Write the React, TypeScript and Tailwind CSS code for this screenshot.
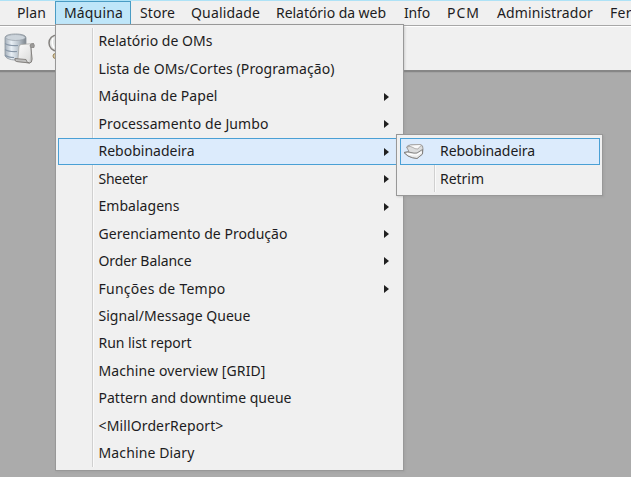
import { useLayoutEffect, useRef } from "react";

type LabelProps = { text: string; width: number };

/* Text whose tracking is adjusted so that it fills the given width. */
function Label({ text, width }: LabelProps) {
  const ref = useRef<HTMLSpanElement>(null);
  useLayoutEffect(() => {
    const el = ref.current;
    if (!el) return;
    el.style.letterSpacing = "0px";
    const natural = el.getBoundingClientRect().width;
    el.style.letterSpacing = `${(width + 1 - natural) / text.length}px`;
  }, [text, width]);
  return (
    <span ref={ref} className="inline-block pb-[0.9px] leading-5 whitespace-pre">
      {text}
    </span>
  );
}

const bar = [
  { text: "Plan", width: 28, box: "w-[47px] pl-[9px] ml-2" },
  { text: "Máquina", width: 58, box: "w-[76px] pl-2 border border-[#4a9cc4] bg-[#bfe6f9]" },
  { text: "Store", width: 34, box: "w-[52px] pl-[9px]" },
  { text: "Qualidade", width: 68, box: "w-[85px] pl-2" },
  { text: "Relatório da web", width: 109, box: "w-[127px] pl-2" },
  { text: "Info", width: 25, box: "w-[44px] pl-[9px]" },
  { text: "PCM", width: 32, box: "w-[50px] pl-2" },
  { text: "Administrador", width: 95, box: "w-[113px] pl-2" },
  { text: "Fer", width: 21, box: "w-[30px] pl-2" },
];

const items = [
  { text: "Relatório de OMs", width: 113 },
  { text: "Lista de OMs/Cortes (Programação)", width: 235 },
  { text: "Máquina de Papel", width: 118, sub: true },
  { text: "Processamento de Jumbo", width: 169, sub: true },
  { text: "Rebobinadeira", width: 95, sub: true, active: true },
  { text: "Sheeter", width: 48, sub: true },
  { text: "Embalagens", width: 80, sub: true },
  { text: "Gerenciamento de Produção", width: 188, sub: true },
  { text: "Order Balance", width: 92, sub: true },
  { text: "Funções de Tempo", width: 126, sub: true },
  { text: "Signal/Message Queue", width: 151 },
  { text: "Run list report", width: 92 },
  { text: "Machine overview [GRID]", width: 166 },
  { text: "Pattern and downtime queue", width: 192 },
  { text: "<MillOrderReport>", width: 124 },
  { text: "Machine Diary", width: 95 },
];

function DatabaseIcon() {
  return (
    <svg className="mt-1.5 ml-1 h-[32px] w-[32px] shrink-0" viewBox="0 0 32 32">
      <defs>
        <linearGradient id="db" x1="0" x2="1">
          <stop offset="0" stopColor="#a2adb9" />
          <stop offset=".3" stopColor="#e8eff5" />
          <stop offset=".65" stopColor="#b9c3cc" />
          <stop offset="1" stopColor="#7d858c" />
        </linearGradient>
        <linearGradient id="paper" x1="0" y1="0" x2="1" y2="1">
          <stop offset="0" stopColor="#ffffff" />
          <stop offset="1" stopColor="#d6d7d6" />
        </linearGradient>
      </defs>
      <path d="M1 5C1 2 6 1 11.500 1S22 2 22 5V23C22 26 17 27 11.500 27S1 25 1 22Z" fill="url(#db)" stroke="#8b949c" strokeWidth=".8" />
      <ellipse cx="11.500" cy="4.500" rx="9.700" ry="3" fill="#ccd4db" stroke="#99a2aa" strokeWidth=".7" />
      <path d="M1 10.500Q5 13 14 12.500M1 16.500Q5 19 13 18.500M1 22Q4 24.500 10 24.500" fill="none" stroke="#8998a8" strokeWidth="1.100" />
      <path d="M15 14Q15 11.500 17.500 11.500L29.500 10.500Q27.500 12 27 15L28 26Q28 30 25.500 30L12.500 28.500Q10.500 28 11 25.500H14Z" fill="url(#paper)" stroke="#a4a3a1" strokeWidth=".7" />
      <path d="M26 12Q27 10.500 29.500 10.500Q31 12 30 14.500H26.500Z" fill="#9c9b99" stroke="#73716e" strokeWidth=".6" />
      <path d="M11 25.500L22 26.500Q22.500 30 25.500 30L12.500 28.500Q10.500 28 11 25.500ZM27 15L28 26Q28 30 25.500 30" fill="#c0c0bf" stroke="#777471" strokeWidth=".8" />
    </svg>
  );
}

function SearchPersonIcon() {
  return (
    <svg className="mt-[7px] ml-[12px] h-[29px] w-[18px] shrink-0" viewBox="0 0 18 29">
      <circle cx="9" cy="9" r="8" fill="#e2e4e3" stroke="#85827f" strokeWidth="1.500" />
      <path d="M5 4Q3 9 6 14" fill="none" stroke="#ffffff" strokeWidth="1.500" />
      <circle cx="7.500" cy="22" r="2.500" fill="#dbcba2" stroke="#97835a" />
    </svg>
  );
}

function RollIcon() {
  return (
    <svg className="h-[17px] w-[22px]" viewBox="0 0 22 17">
      <path d="M1 9.500L6 8.500L3.500 4Q5 2 7.500 2L17 1.500Q20.500 2 20 6L19.500 11L14 15.500Q9 15 5 13Z" fill="#dcdddd" stroke="#92918f" strokeWidth=".9" />
      <path d="M4 4Q7 2.500 10 4.500Q11.500 6 15 6Q17 2.500 19 2.500L17 1.500L7.500 2Z" fill="#fafafa" stroke="#9b9a98" strokeWidth=".7" />
      <path d="M1 9.500Q5 8.500 8 9.500T14 10L19.500 6.500V11L14 15.500Q9 15 5 13Z" fill="#e9eaea" stroke="#7d7c7a" strokeWidth=".9" />
      <path d="M4 10.500Q8 12 13.500 12L18.500 9" fill="none" stroke="#ffffff" strokeWidth="1.200" />
    </svg>
  );
}

export default function App() {
  return (
    <div className="relative flex h-[477px] w-[631px] flex-col overflow-hidden bg-[#ababab] font-['Noto_Sans','Open_Sans',sans-serif] text-[14px] text-[#1d1c22]">
      <nav className="flex h-[26px] shrink-0 overflow-hidden border-t border-b border-t-[#aee2f6] border-b-[#a7a7a7] bg-[#f0f0f0]">
        {bar.map((b) => (
          <div key={b.text} className={`flex h-[25px] shrink-0 items-center ${b.box}`}>
            <Label text={b.text} width={b.width} />
          </div>
        ))}
      </nav>
      <header className="flex h-[46px] shrink-0 items-start border-t border-b-2 border-t-white border-b-[#868686] bg-[#f0f0f0]">
        <DatabaseIcon />
        <SearchPersonIcon />
      </header>
      <main className="flex-1 border-t border-[#a2a2a2] bg-[#ababab]" />

      {/* Open drop-down menu */}
      <div className="absolute top-6 left-[55px] h-[447px] w-[349px] border border-[#989898] bg-[#f0f0f0] pt-[3px] pr-[2px] pl-[2px] shadow-[1px_1px_2px_#8c8c8c55]">
        <div className="absolute top-[3px] bottom-[3px] left-[36px] w-0.5 border-l border-[#d0d0d0] bg-[#fafafa]" />
        <ul className="relative">
          {items.map((it) => (
            <li
              key={it.text}
              className={`flex h-[27.47px] items-center border pr-[11px] pl-[39.5px] ${it.active ? "border-[#4aa0d5] bg-[#dcebfc]" : "border-transparent"}`}
            >
              <Label text={it.text} width={it.width} />
              {it.sub && (
                <svg className="ml-auto h-2 w-[5px]" viewBox="0 0 5 8">
                  <path d="M0 0L5 4L0 8Z" fill="#202020" />
                </svg>
              )}
            </li>
          ))}
        </ul>
      </div>

      {/* Submenu */}
      <div className="absolute top-[134px] left-[396px] h-[62px] w-[207px] border border-[#989898] bg-[#f0f0f0] pt-[3px] pr-[2px] pl-[3px] shadow-[1px_1px_2px_#8c8c8c55]">
        <div className="absolute top-[3px] bottom-[3px] left-[37px] w-0.5 border-l border-[#d0d0d0] bg-[#fafafa]" />
        <ul className="relative">
          <li className="flex h-[27px] items-center border border-[#4aa0d5] bg-[#dcebfc]">
            <span className="flex w-[39px] pl-[2px]">
              <RollIcon />
            </span>
            <Label text="Rebobinadeira" width={94} />
          </li>
          <li className="flex h-[28px] items-center border border-transparent pl-[39px]">
            <Label text="Retrim" width={43} />
          </li>
        </ul>
      </div>
    </div>
  );
}
